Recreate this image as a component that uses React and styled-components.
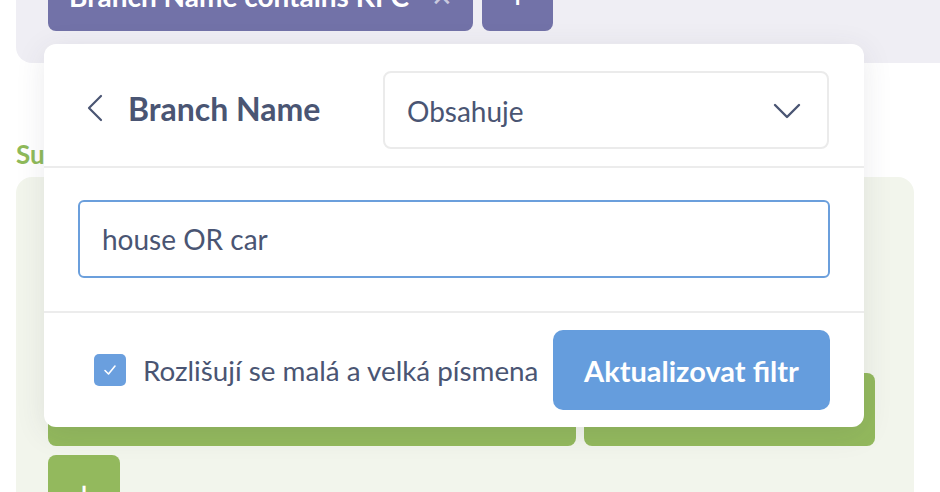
import React from 'react';
import styled, { createGlobalStyle } from 'styled-components';

const GlobalStyle = createGlobalStyle`
	body {
		margin: 0;
		background: #fff;
		font-family: Lato, "Open Sans", sans-serif;
	}
`;

const Page = styled.div`
	position: relative;
	width: 940px;
	height: 492px;
	overflow: hidden;
`;

const FilterBar = styled.div`
	margin: -30px 0 0 16px;
	padding: 0 0 32px 32px;
	display: flex;
	gap: 9px;
	background: #efeef4;
	border-bottom-left-radius: 16px;
`;

const Chip = styled.div`
	height: 61px;
	display: flex;
	align-items: center;
	gap: 22px;
	padding: ${p => (p.square ? '0 0 10px' : '0 20px 10px 21px')};
	width: ${p => (p.square ? '71px' : 'auto')};
	justify-content: center;
	box-sizing: border-box;
	background: #7272a8;
	border-radius: 8px;
	color: #fff;
	font-weight: 700;
	font-size: 28px;
`;

const ChipClose = styled.span`
	font-weight: 400;
	font-size: 26px;
	color: #c9c9de;
`;

const SectionTitle = styled.h2`
	margin: 76px 0 0 16px;
	font-size: 26px;
	font-weight: 700;
	color: #8fba5a;
	line-height: 30px;
`;

const GreenPanel = styled.div`
	margin: 8px 0 0 16px;
	width: 898px;
	height: 400px;
	padding: 196px 32px 0;
	box-sizing: border-box;
	background: #f2f5ec;
	border-radius: 16px;
	display: flex;
	flex-direction: column;
	gap: 9px;
`;

const BlockRow = styled.div`
	display: flex;
	gap: 8px;
`;

const Block = styled.div`
	width: ${p => p.w}px;
	height: 73px;
	background: #93b95d;
	border-radius: 8px;
	display: flex;
	justify-content: center;
	color: #fff;
	font-size: 40px;
	line-height: 1;
	padding-top: 20px;
	box-sizing: border-box;
`;

const Popup = styled.div`
	position: absolute;
	left: 44px;
	top: 44px;
	width: 820px;
	height: 383px;
	background: #fff;
	border-radius: 12px;
	box-shadow: 0 6px 30px rgba(60, 60, 80, 0.10);
	display: flex;
	flex-direction: column;
	color: #4a5573;
`;

const Header = styled.div`
	display: flex;
	align-items: center;
	justify-content: space-between;
	padding: 27px 35px 17px 42px;
	border-bottom: 2px solid #ececec;
`;

const Title = styled.div`
	display: flex;
	align-items: center;
	gap: 24px;
	font-size: 32px;
	font-weight: 700;
	margin-bottom: 4px;
`;

const Select = styled.div`
	width: 446px;
	height: 78px;
	box-sizing: border-box;
	border: 2px solid #ebebeb;
	border-radius: 8px;
	display: flex;
	align-items: center;
	justify-content: space-between;
	padding: 2px 26px 0 22px;
	font-size: 28px;
`;

const Body = styled.div`
	padding: 32px 34px 33px;
	border-bottom: 2px solid #ececec;
`;

const Input = styled.input`
	width: 100%;
	height: 78px;
	box-sizing: border-box;
	border: 2px solid #6b9fdc;
	border-radius: 6px;
	padding: 0 22px;
	font-family: inherit;
	font-size: 28px;
	color: #4a5573;
	outline: none;
`;

const Footer = styled.div`
	flex: 1;
	display: flex;
	align-items: center;
	justify-content: space-between;
	padding: 0 34px 0 50px;
`;

const CheckLabel = styled.label`
	display: flex;
	align-items: center;
	gap: 17px;
	font-size: 27.8px;
`;

const CheckBox = styled.span`
	width: 32px;
	height: 32px;
	border-radius: 5px;
	background: #6a9fde;
	display: flex;
	align-items: center;
	justify-content: center;
`;

const Button = styled.button`
	width: 277px;
	height: 80px;
	border: none;
	border-radius: 10px;
	background: #659ddd;
	color: #fff;
	font-family: inherit;
	font-weight: 700;
	font-size: 29px;
`;

const App = () => (
	<>
		<GlobalStyle />
		<Page>
			<FilterBar>
				<Chip>
					Branch Name contains KFC <ChipClose>✕</ChipClose>
				</Chip>
				<Chip square>+</Chip>
			</FilterBar>
			<SectionTitle>Summary</SectionTitle>
			<GreenPanel>
				<BlockRow>
					<Block w={528} />
					<Block w={291} />
				</BlockRow>
				<Block w={72}>+</Block>
			</GreenPanel>

			<Popup>
				<Header>
					<Title>
						<svg width="18" height="28" viewBox="0 0 18 28" fill="none">
							<path d="M15 2 L3 14 L15 26" stroke="#4a5573" strokeWidth="2.2" strokeLinecap="round" strokeLinejoin="round" />
						</svg>
						Branch Name
					</Title>
					<Select>
						Obsahuje
						<svg width="28" height="16" viewBox="0 0 28 16" fill="none">
							<path d="M2 2 L14 14 L26 2" stroke="#4a5573" strokeWidth="2.4" strokeLinecap="round" strokeLinejoin="round" />
						</svg>
					</Select>
				</Header>
				<Body>
					<Input defaultValue="house OR car" />
				</Body>
				<Footer>
					<CheckLabel>
						<CheckBox>
							<svg width="14" height="12" viewBox="0 0 14 12" fill="none">
								<path d="M2 6.5 L5.5 10 L12 2" stroke="#fff" strokeWidth="1.6" strokeLinecap="round" strokeLinejoin="round" />
							</svg>
						</CheckBox>
						Rozlišují se malá a velká písmena
					</CheckLabel>
					<Button>Aktualizovat filtr</Button>
				</Footer>
			</Popup>
		</Page>
	</>
);

export default App;
